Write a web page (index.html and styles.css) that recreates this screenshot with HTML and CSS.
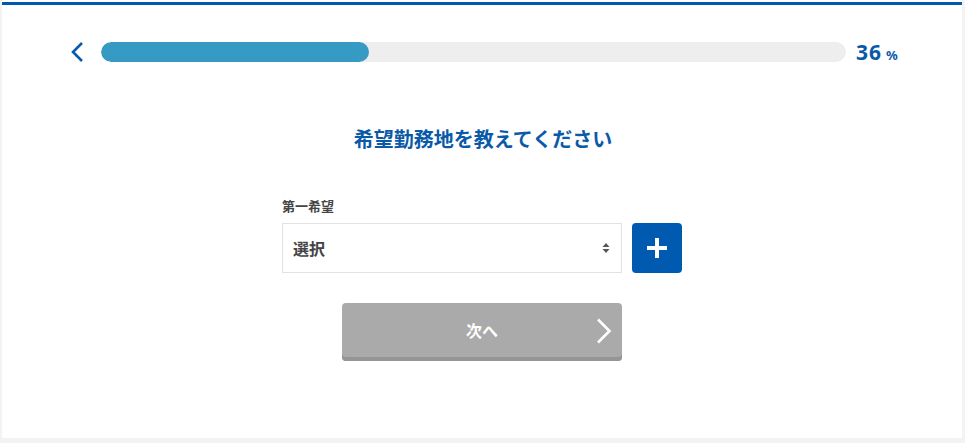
FILE: index.html
```html
<!DOCTYPE html>
<html lang="ja">
<head>
<meta charset="utf-8">
<title>希望勤務地</title>
<link rel="stylesheet" href="styles.css">
</head>
<body>
<div class="card">
  <div class="topbar"></div>
  <div class="progress-row">
    <a class="back" href="#" aria-label="戻る">
      <svg width="16" height="22" viewBox="0 0 16 22"><path d="M13 2 L4 11 L13 20" fill="none" stroke="#0a5aa8" stroke-width="2.6"/></svg>
    </a>
    <div class="track"><div class="fill" style="width:36%"></div></div>
    <div class="percent"><span class="num">36</span><span class="pct">%</span></div>
  </div>
  <h1 class="title">希望勤務地を教えてください</h1>
  <div class="form">
    <div class="label">第一希望</div>
    <div class="select-row">
      <div class="select">
        <span class="select-text">選択</span>
        <svg class="arrows" width="8" height="12" viewBox="0 0 8 12"><path d="M4 1 L7.5 5 H0.5 Z M4 11 L7.5 7 H0.5 Z" fill="#555"/></svg>
      </div>
      <button class="add" aria-label="追加">
        <svg width="22" height="22" viewBox="0 0 22 22"><path d="M11 1 V21 M1 11 H21" stroke="#fff" stroke-width="4"/></svg>
      </button>
    </div>
    <button class="next">
      <span class="next-text">次へ</span>
      <svg class="next-chev" width="16" height="26" viewBox="0 0 16 26"><path d="M2 1.5 L13.5 13 L2 24.5" fill="none" stroke="#fff" stroke-width="2.6"/></svg>
    </button>
  </div>
</div>
</body>
</html>
```
FILE: styles.css
```css
html, body {
  margin: 0;
  padding: 0;
  background: #f3f3f3;
  font-family: "Noto Sans", "Noto Sans CJK JP", sans-serif;
}
.card {
  margin-left: 2px;
  width: 960px;
  height: 438px;
  background: #fff;
  padding-top: 2px;
  box-sizing: border-box;
}
.topbar {
  height: 3px;
  background: #005bac;
}
.progress-row {
  display: flex;
  align-items: center;
  height: 20px;
  margin-top: 37px;
  padding-left: 67px;
}
.back {
  display: flex;
  width: 16px;
  height: 22px;
  margin-right: 16px;
}
.track {
  width: 745px;
  height: 20px;
  background: #eeeeee;
  border-radius: 10px;
  overflow: hidden;
}
.fill {
  height: 100%;
  background: #359bc4;
  border-radius: 10px;
}
.percent {
  margin-left: 10px;
  color: #0a5aa8;
  font-weight: bold;
  display: flex;
  align-items: baseline;
}
.num {
  font-size: 21px;
  font-family: "Noto Sans", sans-serif;
  letter-spacing: 1px;
}
.pct {
  font-size: 13px;
  margin-left: 4px;
  font-weight: bold;
}
.title {
  margin: 63px 0 0;
  text-align: center;
  font-size: 20px;
  line-height: 28px;
  color: #0a5aa8;
  font-weight: bold;
  font-family: "Noto Sans CJK JP", sans-serif;
  padding-left: 2px;
}
.form {
  width: 400px;
  margin: 0 auto;
  padding-top: 45px;
}
.label {
  font-size: 13px;
  line-height: 16px;
  font-weight: bold;
  color: #444;
  font-family: "Noto Sans CJK JP", sans-serif;
}
.select-row {
  display: flex;
  gap: 10px;
  margin-top: 9px;
}
.select {
  width: 340px;
  height: 50px;
  box-sizing: border-box;
  border: 1px solid #e2e2e2;
  display: flex;
  align-items: center;
  justify-content: space-between;
  padding: 0 11px 0 10px;
}
.select-text {
  font-size: 16px;
  font-weight: bold;
  color: #444;
  font-family: "Noto Sans CJK JP", sans-serif;
}
.add {
  width: 50px;
  height: 50px;
  border: none;
  border-radius: 4px;
  background: #005bb0;
  display: flex;
  align-items: center;
  justify-content: center;
  padding: 0;
}
.next {
  display: flex;
  align-items: center;
  justify-content: center;
  position: relative;
  width: 280px;
  height: 58px;
  margin: 30px 0 0 60px;
  border: none;
  border-radius: 4px;
  background: #aaaaaa;
  box-shadow: inset 0 -4px 0 #959595;
  padding: 0 0 4px;
}
.next-text {
  font-size: 16px;
  font-weight: bold;
  color: #fff;
  font-family: "Noto Sans CJK JP", sans-serif;
}
.next-chev {
  position: absolute;
  right: 10px;
  top: 15px;
}
```
